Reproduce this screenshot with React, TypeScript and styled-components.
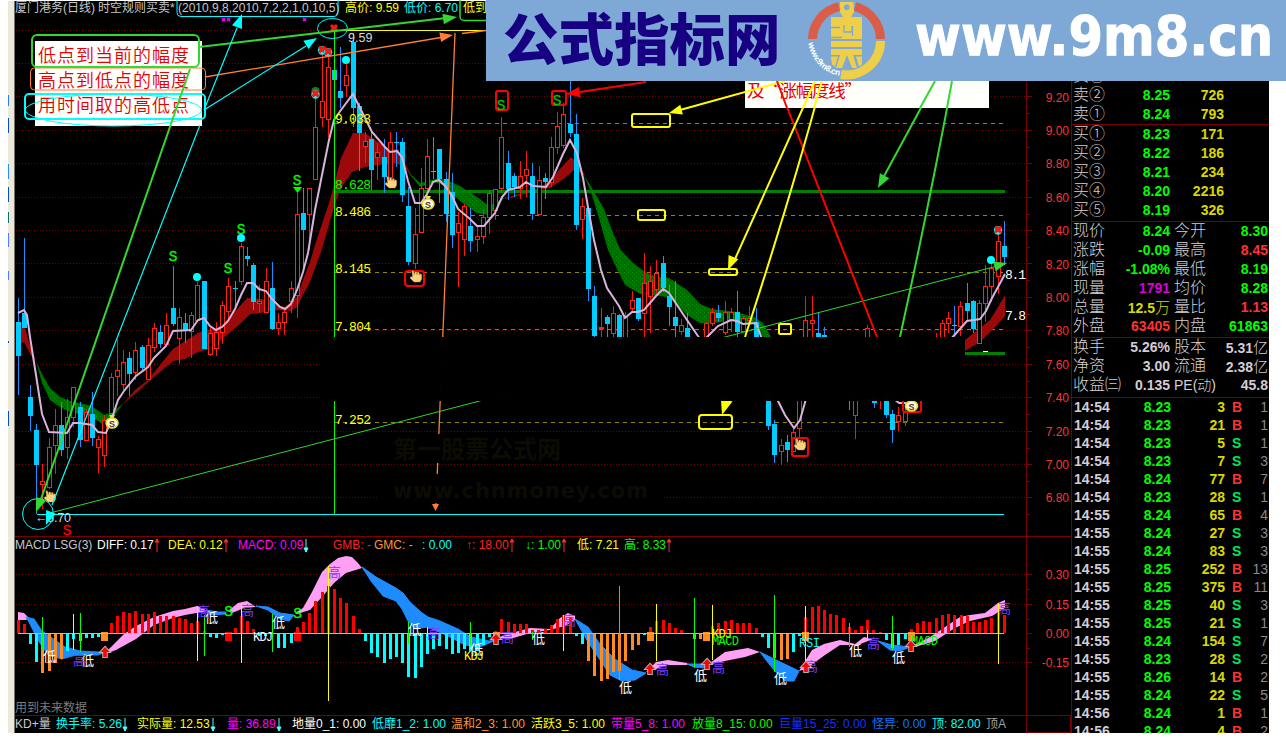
import React from 'react';
import styled, { createGlobalStyle } from 'styled-components';

const Global = createGlobalStyle`
  *{box-sizing:border-box}
  html,body{margin:0;background:#fff;overflow:hidden}
  body{font-family:"Liberation Sans","Noto Sans CJK SC",sans-serif;font-size:12px}
`;

const Page = styled.div`
  position: relative;
  width: 1286px;
  height: 738px;
  padding: 1px 17px 5px 8px;
  display: flex;
  overflow: hidden;
  background: #fff;
`;
const EdgeStrip = styled.div`
  width: 7px;
  flex: none;
  display: flex;
  flex-direction: column;
  background: #ece8da;
  border-right: 1px solid #77746c;
`;
const EdgeMark = styled.i<{ $gap: number; $h: number; $c: string }>`
  width: 1px;
  margin-top: ${p => p.$gap}px;
  height: ${p => p.$h}px;
  background: ${p => p.$c};
`;
const Charts = styled.main`
  width: 1056px;
  flex: none;
  background: #000;
  display: flex;
  flex-direction: column;
`;
const Pane = styled.section<{ $h: number }>`
  height: ${p => p.$h}px;
  flex: none;
  border-bottom: 1px solid #7a0000;
  display: flex;
  flex-direction: column;
`;
const Legend = styled.header<{ $h: number }>`
  height: ${p => p.$h}px;
  line-height: ${p => p.$h}px;
  flex: none;
  display: flex;
  white-space: pre;
  overflow: hidden;
`;
const LegendItem = styled.span<{ $w: number; $c: string }>`
  width: ${p => p.$w}px;
  flex: none;
  color: ${p => p.$c};
  display: flex;
  align-items: center;
`;
const Plot = styled.svg`
  display: block;
  flex: none;
  overflow: visible;
  font-family: "Liberation Sans", "Noto Sans CJK SC", sans-serif;
`;
const Footer = styled.footer`
  height: 17px;
  display: flex;
`;
const AxisBox = styled.div`
  width: 45px;
  margin-left: auto;
  border: 1px solid #7a0000;
  border-top: 0;
`;
const Quotes = styled.aside`
  width: 198px;
  flex: none;
  background: #000;
  border-left: 1px solid #7a0000;
  overflow: hidden;
  display: flex;
  flex-direction: column;
  font-size: 14px;
  font-weight: 700;
`;
const Group = styled.div<{ $h: number; $end?: boolean }>`
  height: ${p => p.$h}px;
  flex: none;
  display: flex;
  flex-direction: column;
  justify-content: ${p => (p.$end ? 'flex-end' : 'flex-start')};
  overflow: hidden;
  border-bottom: 1px solid #7a0000;
`;
const BookRow = styled.div`
  display: grid;
  grid-template-columns: 40px 57px 54px;
  height: 19px;
  line-height: 19px;
  flex: none;
  padding-left: 1px;
`;
const StatRow = styled.div`
  display: grid;
  grid-template-columns: 50px 47px 50px 48px;
  height: 19px;
  line-height: 19px;
  padding-left: 1px;
  white-space: nowrap;
`;
const TickRow = styled.div`
  display: grid;
  grid-template-columns: 44px 53px 54px 18px 25px;
  height: 18px;
  line-height: 19px;
  flex: none;
  padding-left: 2px;
`;
const Label = styled.span<{ $pad?: boolean }>`
  font: 300 16px/18px "Liberation Sans", "Noto Sans CJK SC", sans-serif;
  color: #d4d0d4;
  padding-left: ${p => (p.$pad ? 4 : 0)}px;
  white-space: nowrap;
`;
const MixedLabel = styled(Label)`
  font-size: 14px;
`;
const Num = styled.span<{ $c: string; $thin?: boolean }>`
  color: ${p => p.$c};
  justify-self: end;
  font-weight: ${p => (p.$thin ? 400 : 700)};
`;
const Unit = styled.span`
  font: 300 15px/18px "Noto Sans CJK SC", sans-serif;
`;
const Time = styled.span`
  color: #d4ccd4;
`;
const Side = styled.span<{ $c: string }>`
  color: ${p => p.$c};
  padding-left: 7px;
`;
const Banner = styled.div`
  position: absolute;
  left: 486px;
  top: 0;
  width: 800px;
  height: 81px;
  background: #7ea9d7;
  display: flex;
`;
const BannerTitle = styled.div`
  width: 318px;
  padding-left: 17px;
  font: 900 55.5px/72px "Noto Sans CJK SC", sans-serif;
  color: #170082;
  white-space: nowrap;
`;

const LIME = '#00ff00', CY = '#00ffff', YE = '#ffff00', MG = '#ff00ff', GR = '#32d732', OR = '#ff7f32';

// Candles: x centre, high, low, body top, body bottom.
const up: number[][] = [
  [42.5,464,509,481,484],[49.5,438,489,447,487],[55.5,409,474,425,445],[67.5,399,459,417,447],[73.5,387,427,387,417],[86.5,409,440,412,440],
  [98.5,436,473,439,447],[104.5,415,467,420,455],[111.5,373,417,377,413],[117.5,339,396,370,376],[123.5,350,390,362,384],[135.5,342,380,350,372],
  [148.5,338,379,345,379],[154.5,323,352,328,347],[166.5,313,344,325,344],[179.5,308,364,317,338],[191.5,312,358,315,331],[197.5,282,322,285,320],
  [210.5,328,356,333,354],[216.5,322,356,332,348],[222.5,301,344,305,332],[228.5,278,320,286,311],[241.5,243,285,246,281],[259.5,285,313,301,303],
  [266.5,268,313,281,312],[278.5,313,335,322,328],[284.5,308,335,312,322],[291.5,281,313,288,301],[297.5,193,318,214,295],[309.5,188,250,188,214],
  [315.5,97,179,127,179],[322.5,53,127,101,117],[328.5,55,137,67,119],[346.5,63,97,75,85],[365.5,132,163,141,146],[377.5,143,180,152,157],
  [390.5,132,180,142,177],[415.5,208,269,234,263],[421.5,168,232,188,232],[427.5,139,202,156,188],[458.5,212,287,223,232],[464.5,204,256,206,239],
  [477.5,227,252,236,239],[483.5,209,244,217,236],[489.5,190,234,193,217],[495.5,189,220,189,210],[501.5,117,193,137,188],[520.5,161,199,176,188],
  [526.5,151,197,169,175],[539.5,166,215,180,214],[551.5,137,187,147,182],[557.5,112,154,126,147],[563.5,103,148,114,145],[582.5,198,239,206,219],
  [601.5,308,337,327,328],[613.5,306,337,313,333],[625.5,312,337,317,337],[632.5,291,312,300,308],[644.5,253,337,283,313],[650.5,266,333,281,296],
  [656.5,260,293,273,289],[681.5,319,335,325,331],[706.5,322,337,323,340],[712.5,308,326,312,323],[725.5,301,335,312,332],[731.5,308,332,312,319],
  [743.5,316,331,318,331],[749.5,306,323,318,320],[781.5,439,465,445,451],[793.5,429,452,432,451],[799.5,390,437,395,428],[805.5,296,340,320,340],
  [812.5,296,340,320,323],[867.5,325,340,328,340],[855.5,395,439,395,415],[880.5,395,409,395,398],[898.5,407,431,415,421],[905.5,406,426,412,421],
  [936.5,333,340,339,342],[942.5,320,340,323,340],[948.5,312,333,318,323],[960.5,301,336,306,326],[979.5,300,343,303,343],[985.5,265,322,286,303],
  [991.5,260,302,268,286],[998.5,232,294,241,276],
];
const down: number[][] = [
  [18.5,298,395,322,356],[24.5,238,328,313,328],[30.5,385,431,397,416],[36.5,424,514,430,465],[61.5,402,456,425,450],[80.5,402,447,407,440],
  [92.5,392,446,414,438],[129.5,352,396,358,374],[142.5,345,370,347,368],[160.5,325,348,332,344],[173.5,266,326,308,324],[185.5,313,343,323,330],
  [204.5,281,349,281,349],[235.5,281,306,288,289],[247.5,247,266,256,259],[253.5,263,310,265,302],[272.5,262,330,288,329],[303.5,188,272,213,230],
  [334.5,65,82,70,80],[340.5,47,108,91,98],[353.5,33,127,42,108],[359.5,103,171,106,133],[371.5,132,190,139,170],[384.5,139,193,157,177],
  [396.5,132,167,142,143],[402.5,138,202,142,195],[408.5,187,265,206,262],[433.5,137,179,171,172],[439.5,149,203,149,179],[446.5,172,222,179,214],
  [452.5,173,248,192,235],[470.5,208,252,226,241],[508.5,151,200,163,189],[514.5,173,197,176,187],[532.5,163,220,176,214],[545.5,173,199,178,182],
  [570.5,80,137,124,133],[576.5,114,230,134,225],[588.5,206,301,208,289],[594.5,286,337,296,336],[607.5,315,337,317,324],[619.5,314,337,315,337],
  [638.5,298,321,298,319],[663.5,256,292,263,288],[669.5,285,326,296,307],[675.5,281,337,317,326],[687.5,313,340,328,340],[718.5,305,322,313,318],
  [737.5,291,337,312,332],[756.5,308,340,322,340],[768.5,395,430,395,426],[774.5,420,463,424,455],[787.5,435,462,442,450],[818.5,312,340,333,340],
  [824.5,327,340,335,340],[849.5,395,410,395,398],[874.5,395,408,395,403],[886.5,395,418,395,415],[892.5,410,443,414,430],[954.5,306,334,325,326],
  [967.5,283,322,303,311],[973.5,300,333,301,329],[1004.5,221,265,246,257],
];
const ma = [
  '18,313 24,310 27,315 30,337 36,375 42,414 49,432 67,433 73,423 80,423 92,425 98,432 106,433 112,418 118,400 124,391 136,376 148,367 154,358 166,346 173,331 191,330 198,320 204,318 210,326 216,330 222,327 228,321 235,309 241,295 247,283 253,283 259,289 266,291 272,299 280,307 285,309 291,304 297,290 303,272 308,253 315,210 322,175 329,140 334,120 341,110 353,94 359,106 372,132 385,147 390,152 397,151 402,157 408,181 415,203 421,203 427,194 433,182 439,180 446,187 452,196 458,209 470,219 477,226 484,226 489,220 495,213 502,197 508,190 520,187 526,182 533,186 546,187 553,177 563,154 570,140 577,153 583,178 588,207 594,240 601,270 607,288 619,306 625,318 632,312 638,312 644,310 650,303 656,296 663,289 669,293 675,302 687,320 700,339 706,338 718,326 731,320 737,321 743,324 756,323 762,339',
  '777,399 785,415 794,428 800,420 806,399', '894,399 899,403 906,403', '951,339 967,321 980,319 986,311 992,298 998,287 1005,274',
];
const redBands = [
  '18,328 25,328 30,345 36,361 30,354 24,342 18,345',
  '123,404 135,390 148,380 160,365 173,349 198,333 204,330 216,329 228,319 241,305 247,298 260,299 272,300 280,306 285,307 297,297 303,280 310,262 316,242 329,203 334,185 341,158 353,133 365,133 378,142 390,149 398,149 405,163 413,179 405,167 395,163 378,165 365,167 352,172 341,188 334,207 322,249 310,282 303,295 297,307 290,311 280,310 270,311 260,313 250,314 241,323 228,334 210,349 198,352 185,359 173,361 154,377 135,394',
  '505,198 540,188 550,180 571,157 580,165 585,176 575,169 565,178 550,188 540,190 505,199',
  '965,340 980,328 990,320 998,307 1005,295 1005,316 992,330 980,342 965,351',
];
const greenBands = [
  '36,361 42,374 50,388 60,397 70,401 80,403 92,406 104,415 112,412 123,404 114,416 104,425 92,417 80,414 70,412 60,407 50,400 42,383',
  '408,172 420,183 428,181 439,178 446,180 460,186 477,197 489,206 505,197 489,215 477,213 460,201 446,186 435,182 420,187',
  '584,175 592,188 604,209 613,233 620,249 632,262 645,272 656,277 669,278 687,290 700,304 712,309 737,312 756,318 763,323 771,337 763,337 756,325 737,320 712,323 700,323 687,315 669,297 640,294 625,285 616,267 608,250 600,222 592,195',
];

function Arrow({ x, y, a, c, s = 12 }: { x: number; y: number; a: number; c: string; s?: number }) {
  return <polygon transform={`translate(${x} ${y}) rotate(${a})`} points={`0,0 ${-s},${-s * 0.38} ${-s},${s * 0.38}`} fill={c} />;
}
function Candle({ d, rise }: { d: number[]; rise: boolean }) {
  const [x, hi, lo, t, b] = d;
  return rise ? (
    <g shapeRendering="crispEdges">
      <path d={`M${x} ${hi}V${t}M${x} ${b}V${lo}`} stroke="#ff1414" />
      <rect x={x - 2} y={t + 0.5} width="4" height={Math.max(1, b - t)} fill="#000" stroke="#ff2314" />
    </g>
  ) : (
    <g shapeRendering="crispEdges">
      <path d={`M${x} ${hi}V${lo}`} stroke="#1e90ff" />
      <rect x={x - 2.5} y={t} width="5" height={Math.max(1, b - t)} fill="#00ccff" />
    </g>
  );
}
function Bag({ x, y }: { x: number; y: number }) {
  return (
    <g>
      <path d={`M${x - 3} ${y - 8}h6l-1.5 3h-3z`} fill="#e8d84a" />
      <ellipse cx={x} cy={y} rx="6" ry="5" fill="#fffbe0" stroke="#e6de2c" strokeWidth="1.6" />
      <text x={x} y={y + 3.5} fontSize="9" fontWeight="700" textAnchor="middle" fill="#55302a">S</text>
    </g>
  );
}
function Hand({ x, y }: { x: number; y: number }) {
  return <path transform={`translate(${x} ${y})`} d="M-4-6c2-1 2 1 2 4l1-3 1.5 0 .5 3 .7-2.500 1.500.3.2 2.500.8-1.500 1.500.700V2L4 5h-6l-4-4 1-1.500 1.500.700z" fill="#ffd27c" stroke="#c79a50" strokeWidth=".4" />;
}
function CrossMark({ x, y, dot = true }: { x: number; y: number; dot?: boolean }) {
  return (
    <g>
      {dot && <circle cx={x} cy={y + 0.5} r="4.2" fill={CY} />}
      <path d={`M${x - 3} ${y - 3.5}l6 6m0-6l-6 6`} stroke="#ff1414" strokeWidth="3" />
      <circle cx={x} cy={y - 0.5} r="2.6" fill="#ff1414" />
    </g>
  );
}
const Sig = ({ x, y, c = LIME }: { x: number; y: number; c?: string }) => (
  <text x={x} y={y} fill={c} stroke={c} strokeWidth=".3" fontSize="14.500" textAnchor="middle" fontFamily="Liberation Mono, monospace">S</text>
);

function PriceChart() {
  const ticks = Array.from({ length: 15 }, (_, i) => 30.5 + i * 33.42);
  return (
    <Plot width="1056" height="520" viewBox="15 16 1056 520">
      <defs>
        <pattern id="rd" width="4" height="4" patternUnits="userSpaceOnUse"><rect width="4" height="4" fill="#8c1010" /><path d="M0 0h1v1h-1zM2 2h1v1h-1z" fill="#a80000" /></pattern>
        <pattern id="gn" width="4" height="4" patternUnits="userSpaceOnUse"><rect width="4" height="4" fill="#006a00" /><path d="M0 0h1v1h-1zM2 2h1v1h-1z" fill="#008c00" /></pattern>
      </defs>
      <g shapeRendering="crispEdges">
        {ticks.map((t, i) => {
          const y = Math.round(t) - 0.5;
          return (
            <g key={i}>
              <path d={`M16 ${y}H1026`} stroke="#700000" strokeDasharray="1 2" />
              <path d={`M1027 ${y}h5M1027 ${y + 17}h3`} stroke="#7a0000" />
            </g>
          );
        })}
        <path d="M1026.5 1V536" stroke="#7a0000" />
        {[123.5, 215.5, 272.5, 329.5, 422.5].map(y => <path key={y} d={`M335 ${y}H1003`} stroke="#8c8614" strokeDasharray="4 4" />)}
      </g>
      {redBands.map(p => <polygon key={p} points={p} fill="url(#rd)" />)}
      {greenBands.map(p => <polygon key={p} points={p} fill="url(#gn)" />)}
      <path d="M335 191.500H1005" stroke="#008000" strokeWidth="3" shapeRendering="crispEdges" />
      {up.map((d, i) => <Candle key={i} d={d} rise />)}
      {down.map((d, i) => <Candle key={i} d={d} rise={false} />)}
      {ma.map(p => <polyline key={p} points={p} fill="none" stroke="#d8b4dc" strokeWidth="2" />)}

      <g fill="none" shapeRendering="crispEdges">
        <path d="M334.500 30V514" stroke={LIME} />
        <path d="M37 514.500H1004" stroke={CY} />
        <path d="M335 30.500H486" stroke={YE} />
        <path d="M965 353.500H1005" stroke="#008000" strokeWidth="3" />
        <path d="M983 351.500h5" stroke="#fff" />
      </g>
      <g fontSize="13" fill="#d8d8d8" fontFamily="Liberation Mono, monospace">
        <text x="348" y="42" fontFamily="Liberation Sans, sans-serif" fontSize="12.500">9.59</text>
        <text x="35" y="522" fontSize="12.500" fontFamily="Liberation Sans, sans-serif" textLength="36">←6.70</text>
        <text x="1005" y="279" fill="#fff" textLength="21">8.1</text>
        <text x="1005" y="320" fill="#fff" textLength="21">7.8</text>
      </g>
      <g fontSize="13" fontFamily="Liberation Mono, monospace">
        {([['9.033', 123], ['8.628', 189], ['8.486', 216], ['8.145', 273], ['7.804', 331], ['7.252', 424]] as [string, number][]).map(([t, y]) => (
          <text key={t} x="335" y={y} textLength="36" fill={t === '8.628' ? LIME : YE}>{t}</text>
        ))}
      </g>

      <path d="M50 513L1005 264" stroke="#2fd42f" fill="none" />
      <Arrow x={1007} y={263} a={-15} c={GR} s={13} />
      <path d="M778 84L877 337" stroke="#f00" strokeWidth="2" />
      <path d="M646 82L580 92" stroke="#f00" strokeWidth="2" />
      <Arrow x={566} y={94} a={172} c="#f00" s={14} />
      <g stroke={YE} strokeWidth="2" fill="none">
        <path d="M785 81L680 110M815 81L735 259M822 81Q790 200 745 337" />
        <rect x="632" y="114" width="38" height="13" rx="2" />
        <rect x="638" y="210" width="27" height="10" rx="2" />
        <rect x="709" y="269" width="28" height="6" rx="2" />
        <rect x="779" y="324" width="12" height="10" rx="1" />
        <rect x="699" y="415" width="33" height="14" rx="3" />
      </g>
      <Arrow x={669} y={113} a={165} c={YE} s={13} />
      <Arrow x={728} y={270} a={113} c={YE} s={14} />
      <Arrow x={722} y={415} a={107} c={YE} s={16} />
      <path d="M952 82Q930 200 900 337M935 82L883 178" stroke={GR} strokeWidth="2" fill="none" />
      <Arrow x={878} y={188} a={118} c={GR} s={14} />

      <g fill="none" stroke="#f00" strokeWidth="2">
        <rect x="496" y="91" width="12" height="19" rx="2" /><rect x="552" y="91" width="14" height="14" rx="2" />
        <rect x="405" y="271" width="19" height="15" rx="3" /><rect x="792" y="438" width="16" height="18" rx="2" /><rect x="903" y="398" width="18" height="14" rx="2" />
      </g>
      <Sig x={501} y={110} c="#00c800" /><Sig x={557} y={105} c="#00c800" />
      <Sig x={173} y={261} /><Sig x={228} y={273} /><Sig x={241} y={234} /><Sig x={297} y={185} /><Sig x={67} y={535} c="#f00" />
      <path d="M293 187h9l-4.500 6z" fill={LIME} />
      {[[197, 277], [241, 238], [346, 60], [991, 260]].map(([x, y]) => <circle key={x} cx={x} cy={y} r="4" fill={CY} />)}
      <circle cx="315.500" cy="91" r="4" fill="#008a20" />
      <CrossMark x={315.5} y={94} /><CrossMark x={322} y={50} /><CrossMark x={328} y={52} /><CrossMark x={334} y={28.5} dot={false} /><CrossMark x={998} y={230} />
      <Bag x={112} y={423} /><Bag x={428} y={204} /><Bag x={911.5} y={406} />
      <Hand x={50} y={497} /><Hand x={391} y={183} /><Hand x={416} y={277} /><Hand x={800} y={445} />
      {[222, 227, 303].map(x => <path key={x} d={`M${x} 18l3 3m0-3l-3 3`} stroke={MG} strokeWidth="1.500" />)}

      <path d="M455 33Q446 270 436 505" stroke={OR} strokeWidth="1.300" fill="none" />
      <path d="M432 504h7l-3.500 7z" fill={OR} />
      <path d="M205 77L444 37M462 33.500L486 30.500" stroke={OR} strokeWidth="1.300" />
      <Arrow x={453} y={35} a={-10} c={OR} s={13} />

      <rect x="35" y="41" width="167" height="85" fill="#fffffc" />
      <g fill="#e80000" fontSize="18" fontFamily="Noto Sans CJK SC, sans-serif" fontWeight="350">
        <text x="38" y="62" textLength="151">低点到当前的幅度</text>
        <text x="38" y="87" textLength="151">高点到低点的幅度</text>
        <text x="38" y="112" textLength="151">用时间取的高低点</text>
      </g>
      <g fill="none">
        <rect x="32" y="35" width="167" height="32" rx="5" stroke={GR} strokeWidth="2" />
        <rect x="30.500" y="68" width="175" height="22" rx="4" stroke={OR} />
        <rect x="25" y="94" width="180" height="25" rx="4" stroke={CY} strokeWidth="2" />
        <ellipse cx="113.500" cy="110" rx="88" ry="16" stroke={CY} />
        <rect x="177" y="-6" width="161" height="22.500" rx="4" stroke={CY} />
        <rect x="460" y="-6" width="60" height="26.500" rx="4" stroke={GR} strokeWidth="1.500" />
        <ellipse cx="332.500" cy="28.500" rx="15" ry="10" stroke={CY} />
        <circle cx="38" cy="514" r="15.500" stroke={CY} />
        <path d="M199 47L446 18M190 69L40 502" stroke={GR} strokeWidth="2" />
        <path d="M204 110L237 28M204 110L306 46M200 125L52 505" stroke={CY} strokeWidth="1.200" />
      </g>
      <Arrow x={457} y={17} a={-8} c={GR} s={14} />
      <Arrow x={36} y={512} a={111} c={GR} s={14} />
      <Arrow x={242} y={14} a={-69} c={CY} s={14} />
      <Arrow x={317} y={38} a={-32} c={CY} s={13} />
      <Arrow x={46} y={525} a={111} c={CY} s={14} />

      <rect x="745" y="78" width="244" height="30" fill="#fffffc" />
      <text x="747" y="97" fill="#e80000" fontSize="17.500" fontFamily="Noto Sans CJK SC, sans-serif" textLength="115">及“涨幅度线”</text>
      <path d="M785 81L745 92M815 81L803 108M822 81L814 108" stroke={YE} strokeWidth="2" />
      <path d="M777 81L787 108" stroke="#f00" strokeWidth="2" />
      <path d="M935 81L920 108M952 81L947 108" stroke={GR} strokeWidth="2" />

      <rect x="322" y="337" width="642" height="64" fill="#000" opacity=".985" />
      <rect x="385" y="434" width="218" height="29" /><rect x="379" y="474" width="284" height="29" />
      <g fill="#0d0c03" fontWeight="700" fontSize="24" fontFamily="Noto Sans CJK SC, sans-serif">
        <text x="393" y="458" textLength="168">第一股票公式网</text>
        <text x="393" y="498" fontSize="21" fontFamily="DejaVu Sans, sans-serif" textLength="255">www.chnmoney.com</text>
      </g>
      <g fill="#ff3232" fontSize="12" textAnchor="end">
        {['9.20', '9.00', '8.80', '8.60', '8.40', '8.20', '8.00', '7.80', '7.60', '7.40', '7.20', '7.00', '6.80'].map((t, i) => (
          <text key={t} x="1069" y={101.500 + i * 33.4}>{t}</text>
        ))}
      </g>
    </Plot>
  );
}

// Histogram columns: x centre, outer edge, and a colour code (r, c or o).
const bars = `18 620r 24 624r 30 644c 36 662c 42 673o 49 671o 55 663o 61 659o 67 651c 73 639c 80 641c 86 638c 92 638c 98 637c 111 623r 117 616r 123 612r 129 613r 135 611r 142 614r 148 614r 154 612r 160 616r 166 616r 173 616r 179 618r 185 619r 191 623r 197 621r 204 631r 210 637c 216 638c 222 635c 235 628r 241 616r 247 621r 253 629r 259 636c 265 636c 278 648c 284 648c 291 643c 297 627r 303 622r 309 613r 315 601r 322 592r 328 586r 334 589r 340 598r 346 603r 353 616r 359 629r 365 641c 371 653c 377 657c 384 663c 390 659c 396 657c 402 663c 408 677c 415 678c 421 667c 427 654c 433 649c 439 646c 446 649c 452 654c 458 653c 464 649c 470 651c 477 651c 483 645c 489 637c 495 631r 501 619r 508 622r 514 624r 520 624r 526 624r 532 630r 538 630r 545 629r 551 625r 557 619r 563 615r 570 617r 576 636c 582 644c 588 661o 594 676o 601 681o 607 679o 613 672o 619 671o 625 661o 632 650o 638 645o 644 635c 650 627r 656 621r 663 620r 669 623r 675 628r 681 630r 694 639o 700 639o 712 626r 718 623r 725 621r 731 620r 737 623r 743 623r 749 623r 756 628r 762 637c 768 648c 774 658o 781 660o 787 659o 793 652c 799 636c 805 617r 812 607r 818 606r 824 610r 830 614r 836 615r 843 618r 849 627r 855 630r 861 626r 867 620r 873 630r 880 632r 886 640c 892 648c 898 645c 905 639c 911 629r 917 623r 923 621r 929 622r 936 618r 942 615r 948 614r 954 615r 961 615r 967 616r 973 622r 979 622r 985 620r 991 618r 998 613r 1004 615r`;
const pinks = [
  '18,612 24,613 29,618 26,620 18,620', '106,652 116,642 124,634 136,626 154,617 173,611 185,609 197,606 208,611 185,615 173,618 154,625 136,639 116,650 108,653',
  '228,611 238,603 247,601 256,607 244,608 232,613', '295,613 303,608 312,592 322,572 330,564 338,558 346,556 352,557 358,563 362,568 346,573 334,583 322,597 310,610 297,614',
  '496,638 515,632 530,628 550,629 560,618 568,613 575,616 575,620 565,626 550,630 530,633 510,639', '646,672 656,662 668,660 687,663 687,665 668,665 650,671',
  '710,663 725,652 748,648 760,652 745,657 725,661 712,664', '799,671 812,650 824,644 840,640 855,644 864,637 873,639 858,645 840,645 825,655 806,669',
  '912,646 930,637 945,627 960,617 970,615 985,613 998,603 1005,600 1005,608 992,616 970,621 955,628 935,641 915,647',
];
const blues = [
  '26,617 34,619 42,631 55,640 65,647 80,651 98,652 106,652 98,655 80,655 72,656 62,659 48,655 38,640 30,624', '206,610 218,612 226,612 225,614 210,615',
  '256,606 268,607 280,613 294,615 289,621 280,619 268,610', '362,567 376,577 396,588 403,593 410,602 421,612 428,617 440,621 458,629 471,637 489,641 496,640 480,647 465,645 446,635 427,627 415,629 408,621 402,609 396,601 383,596 371,581',
  '575,619 588,627 600,644 615,659 632,670 646,673 635,680 622,681 610,675 600,660 588,642', '687,664 700,664 712,662 705,668 694,667',
  '760,652 774,659 799,671 794,681 785,681 774,670 766,660', '878,641 892,645 910,647 900,651 890,650',
];
const yLines = [[73, 614, 650], [197, 606, 661], [241, 604, 663], [328, 566, 701], [427, 627, 637], [563, 615, 651], [656, 604, 661], [712, 605, 660], [805, 606, 663], [867, 630, 638], [998, 603, 664]];
const gLines = [[42, 617, 650], [80, 613, 652], [204, 615, 656], [272, 614, 652], [408, 622, 644], [470, 622, 645], [532, 632, 640], [619, 586, 680], [694, 598, 668], [774, 595, 672], [849, 623, 647], [892, 616, 650]];
const lows = [[43, 661], [81, 665], [205, 622], [272, 627], [408, 634], [470, 654], [532, 643], [619, 692], [694, 680], [774, 683], [849, 655], [892, 662]];
const highs = [[73, 665], [197, 616], [241, 615], [328, 577], [427, 638], [501, 642], [563, 625], [656, 674], [712, 672], [805, 671], [867, 648], [998, 613]];

function MacdChart() {
  const items = bars.match(/\d+ \d+[rco]/g) || [];
  return (
    <Plot width="1056" height="162" viewBox="15 553 1056 162">
      <g shapeRendering="crispEdges">
        {[574.5, 604.5, 662.5].map(y => <path key={y} d={`M16 ${y}H1026`} stroke="#700000" strokeDasharray="1 2" />)}
        <path d="M1026.500 537V733M1027 574.500h5M1027 604.500h5M1027 633.500h5M1027 662.500h5M1027 589.500h3M1027 619.500h3M1027 648.500h3" stroke="#7a0000" />
      </g>
      {pinks.map(p => <polygon key={p} points={p} fill="#ffa0f4" />)}
      {blues.map(p => <polygon key={p} points={p} fill="#1e8cff" stroke="#1e8cff" />)}
      <g shapeRendering="crispEdges">
        {items.map(s => {
          const [x, v] = s.split(' ');
          const y = parseInt(v, 10);
          const c = { r: '#ff0000', c: '#00ffff', o: '#ff8c1e' }[v.slice(-1)];
          return <rect key={s} x={+x - 1} y={Math.min(y, 633)} width="3" height={Math.abs(y - 633)} fill={c} />;
        })}
        {[101, 493, 647, 703, 802, 908].map(x => <rect key={x} x={x} y="632" width="7" height={x === 493 ? 5 : 9} fill="#ff8c1e" />)}
        {[225, 294].map(x => <rect key={x} x={x} y="632" width="7" height="9" fill="#f00" />)}
        <path d="M18 633.500H1004" stroke="#32f4ff" />
        {yLines.map(([x, a, b]) => <path key={x} d={`M${x + 0.5} ${a}V${b}`} stroke={YE} />)}
        {gLines.map(([x, a, b]) => <path key={x} d={`M${x + 0.5} ${a}V${b}`} stroke={LIME} />)}
      </g>
      <g fontSize="13" fontFamily="Noto Sans CJK SC, sans-serif">
        {lows.map(([x, y]) => <text key={x} x={x} y={y} fill="#fff">低</text>)}
        {highs.map(([x, y]) => <text key={x} x={x} y={y} fill="#7a3cff">高</text>)}
      </g>
      <g fontSize="12" fontFamily="Liberation Mono, monospace">
        <text x="253" y="641" fill="#fff" textLength="20">KDJ</text><text x="464" y="660" fill={YE} textLength="20">KDJ</text>
        <text x="712" y="638" fill={YE} textLength="20">KDJ</text><text x="712" y="645" fill={LIME} textLength="27">MACD</text>
        <text x="911" y="645" fill={LIME} textLength="27">MACD</text><text x="799" y="647" fill={CY} textLength="21">RSI</text>
      </g>
      <Sig x={228.5} y={616} /><Sig x={297.5} y={618} />
      {[[105, 652], [496, 639], [650, 669], [707, 664], [806, 667], [911, 646]].map(([x, y]) => (
        <path key={x} d={`M${x} ${y - 5}l4.500 5h-2.700v5h-3.600v-5h-2.700z`} fill="#f00" stroke="#b8b0b0" strokeWidth="2" paintOrder="stroke" />
      ))}
      <text x="15" y="712" fontSize="12" fill="#7c7c7c">用到未来数据</text>
      <g fill="#ff3232" fontSize="12" textAnchor="end">
        <text x="1069" y="579">0.30</text><text x="1069" y="609">0.15</text><text x="1069" y="638">0.00</text><text x="1069" y="667">-0.15</text>
      </g>
    </Plot>
  );
}

type Item = [string, number, string, ('u' | 'd')?];
const titleItems: Item[] = [['厦门港务(日线)', 83, '#c8c8c8'], ['时空规则买卖*', 80, '#c8c8c8'], ['(2010,9,8,2010,7,2,2,1,0,10,5)', 167, '#c8c8c8'], ['高价: 9.59', 59, YE], ['低价: 6.70', 59, CY], ['低到', 30, YE]];
const macdItems: Item[] = [['MACD LSG(3)', 82, '#c8c8c8'], ['DIFF: 0.17', 71, '#fff', 'u'], ['DEA: 0.12', 70, YE, 'u'], ['MACD: 0.09', 95, MG, 'd'], ['GMB: -', 41, '#ff2020'], ['GMC: -', 48, '#ff9632'], [': 0.00', 44, CY], ['↑: 18.00', 59, '#ff2020', 'u'], ['↓: 1.00', 52, LIME, 'u'], ['低: 7.21', 47, YE], ['高: 8.33', 60, LIME, 'u']];
const kdItems: Item[] = [['KD+量', 41, '#c8c8c8'], ['换手率: 5.26', 81, CY, 'd'], ['实际量: 12.53', 90, YE, 'd'], ['量: 36.89', 65, MG, 'd'], ['地量0_1: 0.00', 80, '#fff'], ['低靡1_2: 1.00', 79, CY], ['温和2_3: 1.00', 80, '#ff9632'], ['活跃3_5: 1.00', 80, YE], ['带量5_8: 1.00', 81, MG], ['放量8_15: 0.00', 87, LIME], ['巨量15_25: 0.00', 93, '#1432ff'], ['怪异: 0.00', 60, '#0a78ff'], ['顶: 82.00', 54, CY], ['顶A', 24, '#a0a0a0']];

function LegendBar({ items, h }: { items: Item[]; h: number }) {
  return (
    <Legend $h={h}>
      {items.map(([t, w, c, dir]) => (
        <LegendItem key={t} $w={w} $c={c}>
          {t}
          {dir && (
            <svg width="6" height="15" viewBox="0 0 6 15">
              {dir === 'u' ? <path d="M3 1v13M1 4l2-3 2 3z" stroke="#ff2828" fill="#ff2828" /> : <path d="M3 1v13M1 10l2 4 2-4z" stroke="#50ffff" fill="#50ffff" />}
            </svg>
          )}
        </LegendItem>
      ))}
    </Legend>
  );
}

const G = '#00ff00', Y = '#d8d800', R = '#ff3232', W = '#d4ccd4';
const asks = [['卖③', '8.26', '324'], ['卖②', '8.25', '726'], ['卖①', '8.24', '793']];
const bids = [['买①', '8.23', '171'], ['买②', '8.22', '186'], ['买③', '8.21', '234'], ['买④', '8.20', '2216'], ['买⑤', '8.19', '326']];
const stats = [['现价', '8.24', G, '今开', '8.30', G], ['涨跌', '-0.09', G, '最高', '8.45', R], ['涨幅', '-1.08%', G, '最低', '8.19', G], ['现量', '1791', '#d800d8', '均价', '8.28', G], ['总量', '12.5万', Y, '量比', '1.13', R], ['外盘', '63405', R, '内盘', '61863', G]];
const facts = [['换手', '5.26%', W, '股本', '5.31亿', W], ['净资', '3.00', W, '流通', '2.38亿', W], ['收益㈢', '0.135', W, 'PE(动)', '45.8', W]];
const trades = '14:54 8.23 3 B 1|14:54 8.23 21 B 1|14:54 8.23 5 S 1|14:54 8.23 7 S 3|14:54 8.24 77 B 7|14:54 8.23 28 S 1|14:55 8.24 65 B 4|14:55 8.24 27 S 3|14:55 8.24 83 S 3|14:55 8.25 252 B 13|14:55 8.25 375 B 11|14:55 8.25 40 S 3|14:55 8.25 21 S 1|14:55 8.24 154 S 7|14:55 8.23 28 S 2|14:55 8.26 14 B 2|14:55 8.24 22 S 5|14:56 8.24 1 B 1|14:56 8.24 4 B 2'.split('|').map(r => r.split(' '));

function Value({ text, color }: { text: string; color: string }) {
  const unit = /[万亿]$/.test(text) ? text.slice(-1) : '';
  return <Num $c={color}>{unit ? text.slice(0, -1) : text}{unit && <Unit>{unit}</Unit>}</Num>;
}
const Book = ({ rows }: { rows: string[][] }) => (
  <>{rows.map(([a, b, c]) => <BookRow key={a}><Label>{a}</Label><Num $c={G}>{b}</Num><Num $c={Y}>{c}</Num></BookRow>)}</>
);
const Stats = ({ rows }: { rows: string[][] }) => (
  <>
    {rows.map(([a, b, c, d, e, f]) => (
      <StatRow key={a}>
        <Label>{a}</Label>
        <Value text={b} color={c} />
        {d.startsWith('PE') ? <MixedLabel $pad>{d}</MixedLabel> : <Label $pad>{d}</Label>}
        <Value text={e} color={f} />
      </StatRow>
    ))}
  </>
);

function Logo() {
  return (
    <svg width="96" height="81" viewBox="804 0 96 81">
      <path d="M812.500 39A34 34 0 0 1 839 6.700" fill="none" stroke="#d95d49" strokeWidth="9" />
      <path d="M855 6.700A34 34 0 0 1 880.500 39" fill="none" stroke="#d95d49" strokeWidth="9" />
      <path d="M880.500 41A34 34 0 0 1 841 74.500" fill="none" stroke="#f0cf48" strokeWidth="9" />
      <path fillRule="evenodd" fill="#f0cf48" d="M840 2h13.500l.5 10-3 5h11v22h-31V17h12l-3-5zM846.700 4.200a3 3 0 1 0 .1 0zM831 41h31v6h-31zM831 49h31v6h-9l4 13h-5l-5-13-5 13h-6l4-13h-9zM831 56.500h7l-3 10-3-2zM856 56.500h6v8l-3 2z" />
      <path d="M831 27.500h9M844 25v7h8v-6M852.500 26v10M831 37.500h11" stroke="#7ea9d7" strokeWidth="1.300" fill="none" />
      <path id="logoArc" d="M808.500 43A38 38 0 0 0 841 76" fill="none" />
      <text fontSize="8.500" fontWeight="700" fill="#fff"><textPath href="#logoArc" textLength="48">www.9m8.cn</textPath></text>
    </svg>
  );
}

export default function App() {
  return (
    <>
      <Global />
      <Page>
        <EdgeStrip>
          <EdgeMark $gap={94} $h={11} $c="#2a7bff" /><EdgeMark $gap={12} $h={15} $c="#0050c8" /><EdgeMark $gap={31} $h={15} $c="#2090ff" />
          <EdgeMark $gap={8} $h={15} $c="#0050c8" /><EdgeMark $gap={10} $h={11} $c="#107070" /><EdgeMark $gap={10} $h={14} $c="#4a80ff" />
          <EdgeMark $gap={24} $h={9} $c="#4a80ff" /><EdgeMark $gap={61} $h={2} $c="#0050c8" /><EdgeMark $gap={68} $h={15} $c="#0050c8" />
        </EdgeStrip>
        <Charts>
          <Pane $h={536}>
            <LegendBar items={titleItems} h={15} />
            <PriceChart />
          </Pane>
          <Pane $h={179}>
            <LegendBar items={macdItems} h={16} />
            <MacdChart />
          </Pane>
          <Footer>
            <LegendBar items={kdItems} h={16} />
            <AxisBox />
          </Footer>
        </Charts>
        <Quotes>
          <Group $h={124} $end><Book rows={asks} /></Group>
          <Group $h={97}><Book rows={bids} /></Group>
          <Group $h={116}><Stats rows={stats} /></Group>
          <Group $h={60}><Stats rows={facts} /></Group>
          {trades.map(([t, p, v, s, n], i) => (
            <TickRow key={i}>
              <Time>{t}</Time><Num $c={G}>{p}</Num><Num $c={Y}>{v}</Num><Side $c={s === 'B' ? R : '#00e65a'}>{s}</Side><Num $c="#8c8890" $thin>{n}</Num>
            </TickRow>
          ))}
        </Quotes>
        <Banner>
          <BannerTitle>公式指标网</BannerTitle>
          <Logo />
          <svg width="386" height="81" viewBox="900 0 386 81">
            <text x="915" y="55" fontFamily="DejaVu Sans, sans-serif" fontWeight="700" fontSize="56" fill="#fff" stroke="#fff" textLength="358" lengthAdjust="spacingAndGlyphs">www.9m8.cn</text>
          </svg>
        </Banner>
      </Page>
    </>
  );
}
